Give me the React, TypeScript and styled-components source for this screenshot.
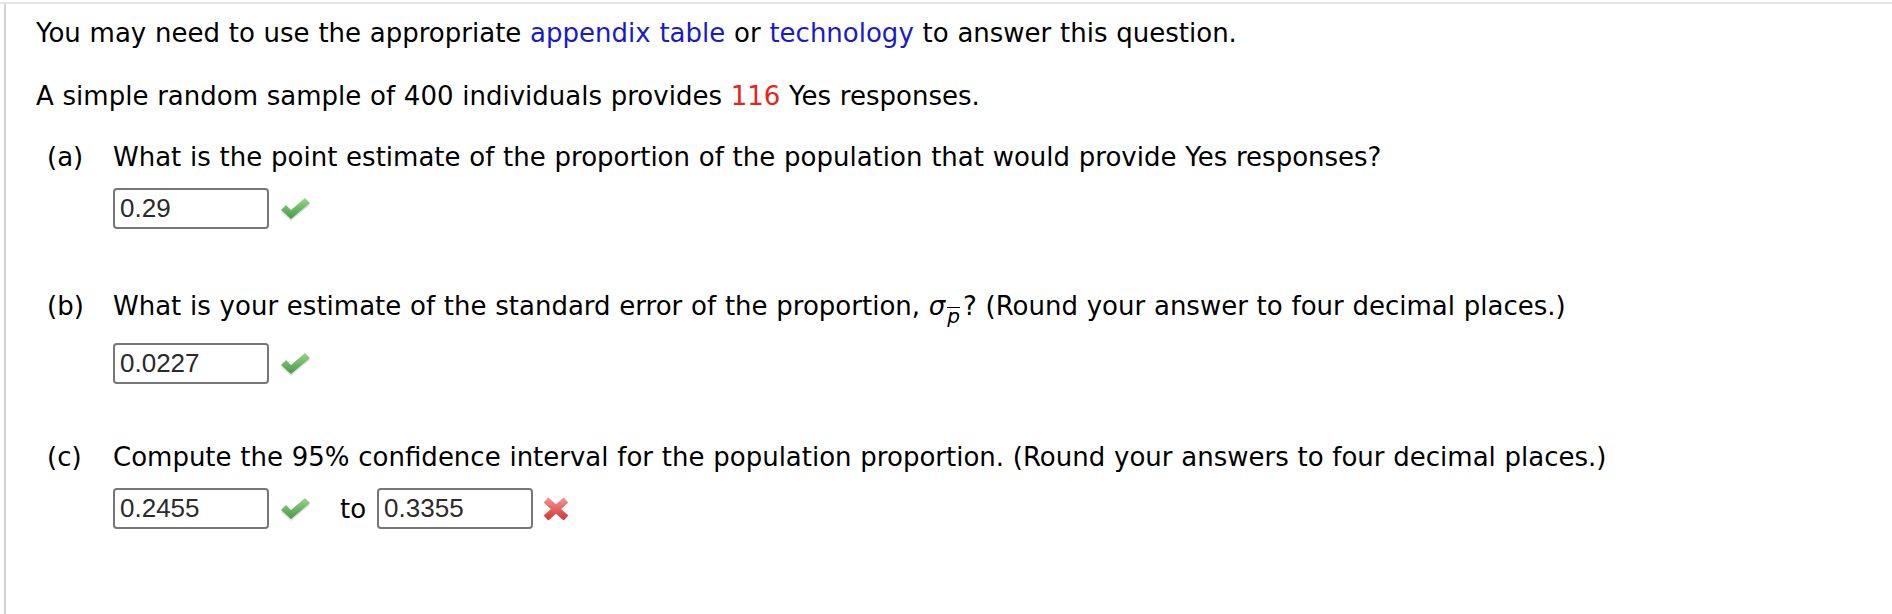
import styled, { createGlobalStyle } from "styled-components";

const GlobalStyle = createGlobalStyle`
    html, body {
        margin: 0;
        background: #fff;
    }
    body {
        font-family: "DejaVu Sans", Verdana, sans-serif;
        color: #000;
        word-spacing: 0.5px;
    }
`;

const Page = styled.div`
    margin-top: 2px;
    border-top: 2px solid #e4e4e4;
    height: calc(100vh - 4px);
    display: flex;
    flex-direction: column;
`;

const Panel = styled.main`
    flex: 1;
    margin-left: 4px;
    border-left: 2px solid #d2d2d2;
    padding: 13px 0 0 30px;
`;

const Line = styled.p<{ $gap?: number }>`
    margin: ${(p) => p.$gap ?? 0}px 0 0;
    font-size: 26px;
    line-height: 32px;
`;

const Link = styled.span`
    color: #1a1ac8;
`;

const Given = styled.span`
    color: #e8231c;
`;

const Part = styled.section<{ $gap: number }>`
    display: grid;
    grid-template-columns: 66px 1fr;
    margin-top: ${(p) => p.$gap}px;
    padding-left: 11px;
    font-size: 26px;
    line-height: 32px;
`;

const Label = styled.span`
    grid-column: 1;
`;

const Question = styled.div`
    grid-column: 2;
`;

const AnswerRow = styled.div<{ $gap: number }>`
    grid-column: 2;
    display: flex;
    align-items: center;
    margin-top: ${(p) => p.$gap}px;
`;

const Field = styled.input`
    box-sizing: border-box;
    width: 156px;
    height: 41px;
    margin: 0;
    padding: 0 5px;
    border: 2px solid #777;
    border-radius: 4px;
    font-family: "Liberation Sans", Arial, sans-serif;
    font-size: 26px;
    word-spacing: normal;
    color: #2a2a2a;
    background: #fff;
    outline: none;
`;

const Mark = styled.span<{ $left: number }>`
    display: inline-flex;
    margin-left: ${(p) => p.$left}px;
`;

const Between = styled.span`
    margin: 0 11px 0 30px;
    font-size: 26px;
`;

const Sigma = styled.i`
    font-style: italic;
`;

const BarSub = styled.span`
    display: inline-block;
    margin: 0 3px 0 2px;
    font-size: 20px;
    line-height: 16px;
    font-style: italic;
    border-top: 1.5px solid #000;
    vertical-align: -8px;
`;

const Check = ({ left }: { left: number }) => (
    <Mark $left={left}>
        <svg width="30" height="24" viewBox="0 0 30 24">
            <defs>
                <linearGradient id="ok" x1="0" y1="0" x2="0" y2="1">
                    <stop offset="0" stopColor="#96d68a" />
                    <stop offset="1" stopColor="#449a44" />
                </linearGradient>
            </defs>
            <polygon points="1,14 6,9 11,14 25,2 30,7 11,23" fill="#000" opacity="0.12" transform="translate(0 1)" />
            <polygon points="1,13 6,8 11,13 25,1 30,6 11,22" fill="url(#ok)" />
        </svg>
    </Mark>
);

const Cross = ({ left }: { left: number }) => (
    <Mark $left={left}>
        <svg width="26" height="24" viewBox="0 0 26 24">
            <defs>
                <linearGradient id="bad" x1="0" y1="0" x2="0" y2="1">
                    <stop offset="0" stopColor="#f28a8a" />
                    <stop offset="1" stopColor="#d43d3d" />
                </linearGradient>
            </defs>
            <path d="M3 3 L23 21 M23 3 L3 21" stroke="url(#bad)" strokeWidth="7" fill="none" />
        </svg>
    </Mark>
);

export default function App() {
    return (
        <>
            <GlobalStyle />
            <Page>
                <Panel>
                    <Line>
                        You may need to use the appropriate <Link>appendix table</Link> or{" "}
                        <Link>technology</Link> to answer this question.
                    </Line>
                    <Line $gap={31}>
                        A simple random sample of 400 individuals provides <Given>116</Given> Yes responses.
                    </Line>

                    <Part $gap={29}>
                        <Label>(a)</Label>
                        <Question>
                            What is the point estimate of the proportion of the population that would provide Yes
                            responses?
                        </Question>
                        <AnswerRow $gap={15}>
                            <Field readOnly defaultValue="0.29" />
                            <Check left={11} />
                        </AnswerRow>
                    </Part>

                    <Part $gap={61}>
                        <Label>(b)</Label>
                        <Question>
                            What is your estimate of the standard error of the proportion, <Sigma>σ</Sigma>
                            <BarSub>p</BarSub>? (Round your answer to four decimal places.)
                        </Question>
                        <AnswerRow $gap={19}>
                            <Field readOnly defaultValue="0.0227" />
                            <Check left={11} />
                        </AnswerRow>
                    </Part>

                    <Part $gap={57}>
                        <Label>(c)</Label>
                        <Question>
                            Compute the 95% confidence interval for the population proportion. (Round your answers
                            to four decimal places.)
                        </Question>
                        <AnswerRow $gap={15}>
                            <Field readOnly defaultValue="0.2455" />
                            <Check left={11} />
                            <Between>to</Between>
                            <Field readOnly defaultValue="0.3355" />
                            <Cross left={10} />
                        </AnswerRow>
                    </Part>
                </Panel>
            </Page>
        </>
    );
}
